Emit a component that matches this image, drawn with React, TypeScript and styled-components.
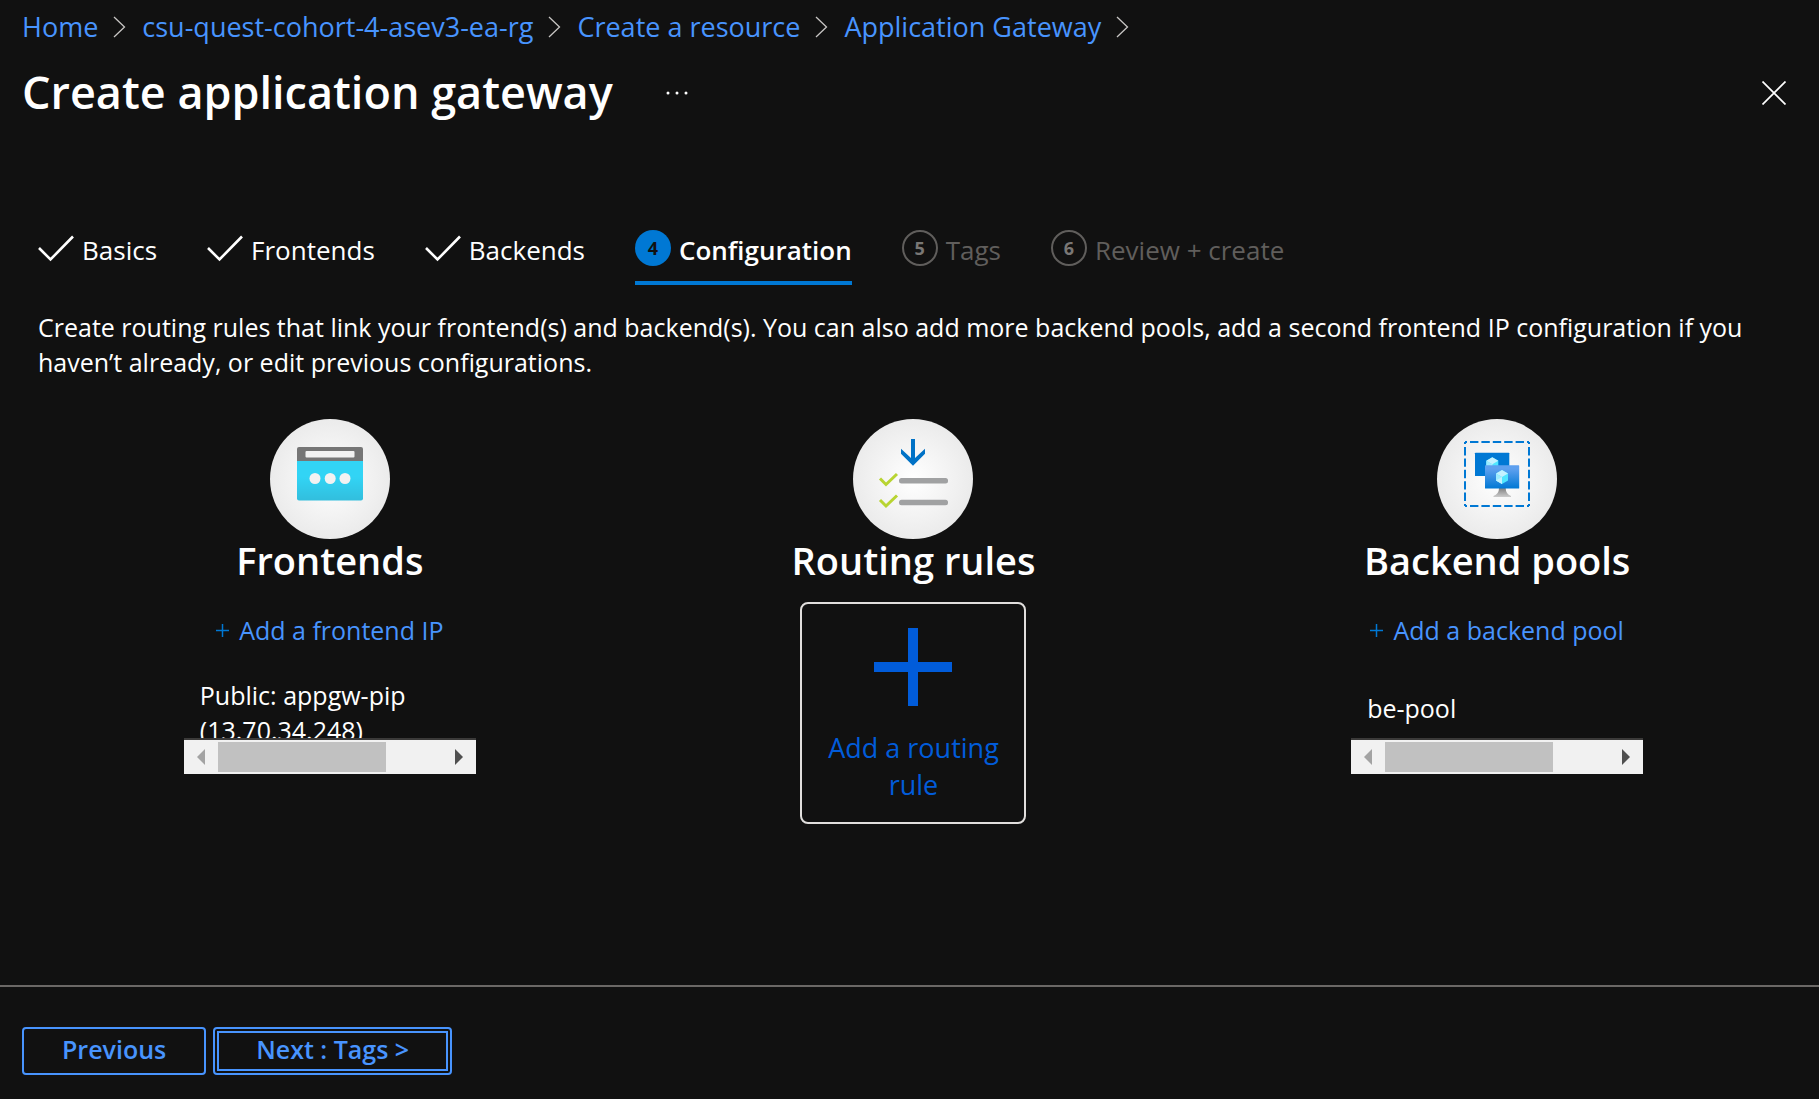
import React from "react";
import styled, { createGlobalStyle, css } from "styled-components";

const color = {
  page: "#111111",
  text: "#ffffff",
  link: "#4894fe",
  accent: "#0078d4",
  action: "#015cda",
  muted: "#605e5c",
  rule: "#6b6866",
};

const GlobalStyle = createGlobalStyle`
  *, *::before, *::after { box-sizing: border-box; }
  body {
    margin: 0;
    background: ${color.page};
    color: ${color.text};
    font-family: "Segoe UI", "Open Sans", "Noto Sans", sans-serif;
    font-size: 25px;
    line-height: 35px;
  }
  button { font: inherit; color: inherit; background: none; border: 0; padding: 0; cursor: pointer; }
  a { color: ${color.link}; text-decoration: none; }
  h1, h2, p, ol, ul { margin: 0; padding: 0; }
  ol, ul { list-style: none; }
  svg { display: block; flex: none; }
`;

const Page = styled.div`
  min-height: 100vh;
  display: flex;
  flex-direction: column;
`;

const Crumbs = styled.ol`
  display: flex;
  flex-wrap: wrap;
  padding: 9px 22px 0;
  font-size: 27px;
`;

const Crumb = styled.li`
  display: flex;
  align-items: center;
  gap: 15px;
  margin-right: 16px;
`;

const TitleBar = styled.header`
  display: flex;
  align-items: center;
  padding: 16px 33px 0 22px;
  height: 81px;
`;

const Title = styled.h1`
  padding-bottom: 2px;
  font-size: 45px;
  line-height: 62px;
  font-weight: 600;
`;

const IconButton = styled.button<{ $push?: boolean }>`
  display: flex;
  margin-left: ${(p) => (p.$push ? "auto" : "52px")};
`;

const Main = styled.main`
  flex: 1;
  padding: 97px 30px 0 38px;
`;

const Tabs = styled.div`
  display: flex;
  gap: 50px;
`;

const Tab = styled.button<{ $active?: boolean }>`
  display: flex;
  align-items: center;
  gap: 8px;
  height: 63px;
  padding-bottom: 8px;
  border-bottom: 4px solid transparent;
  font-size: 26px;
  ${(p) =>
    p.$active &&
    css`
      border-bottom-color: ${color.accent};
      font-weight: 600;
    `}
  &:disabled {
    color: ${color.muted};
  }
`;

const TabLabel = styled.span`
  padding-top: 6px;
`;

const StepNumber = styled.span<{ $active?: boolean }>`
  display: flex;
  align-items: center;
  justify-content: center;
  width: 36px;
  height: 36px;
  border: ${(p) => (p.$active ? "0" : `2px solid ${color.muted}`)};
  border-radius: 50%;
  background: ${(p) => (p.$active ? color.accent : "none")};
  color: ${(p) => (p.$active ? color.page : "#797775")};
  font-size: 18px;
  line-height: 24px;
  font-weight: 700;
`;

const Intro = styled.p`
  padding-top: 25px;
`;

const Columns = styled.div`
  display: grid;
  grid-template-columns: repeat(3, 1fr);
  padding-top: 39px;
`;

const Column = styled.section`
  display: flex;
  flex-direction: column;
  align-items: center;
`;

const Heading = styled.h2`
  font-size: 38px;
  line-height: 42px;
  font-weight: 600;
`;

const AddLink = styled.button`
  display: flex;
  align-items: center;
  gap: 10px;
  margin-top: 32px;
  color: ${color.link};
`;

const ItemPane = styled.div`
  width: 292px;
  margin-top: 30px;
`;

const Items = styled.div`
  display: flex;
  align-items: safe center;
  height: 62px;
  padding: 0 16px;
  border-bottom: 2px solid #3b3a39;
  overflow: hidden;
`;

const ScrollBar = styled.div`
  display: flex;
  height: 34px;
  padding: 2px 0;
  background: #f1f1f1;
`;

const ScrollArrow = styled.button`
  display: flex;
  align-items: center;
  justify-content: center;
  width: 34px;
`;

const ScrollTrack = styled.div`
  flex: 1;
`;

const ScrollThumb = styled.div`
  width: 75%;
  height: 100%;
  background: #c1c1c1;
`;

const RuleCard = styled.button`
  display: flex;
  flex-direction: column;
  align-items: center;
  gap: 23px;
  width: 226px;
  margin-top: 21px;
  padding: 24px 20px 19px;
  border: 2px solid #e1dfdd;
  border-radius: 8px;
  color: ${color.action};
  font-size: 27px;
  line-height: 37px;
`;

const Footer = styled.footer`
  display: flex;
  gap: 7px;
  padding: 40px 22px 24px;
  border-top: 2px solid ${color.rule};
`;

const FooterButton = styled.button<{ $focused?: boolean }>`
  height: 48px;
  padding: 0 ${(p) => (p.$focused ? 41 : 38)}px 3px;
  border: 2px solid ${color.link};
  border-radius: 4px;
  color: ${color.link};
  font-weight: 600;
  outline: ${(p) => (p.$focused ? `2px solid ${color.link}` : "none")};
  outline-offset: -6px;
`;

const Chevron = () => (
  <svg width="13" height="22" viewBox="0 0 13 22" fill="none" stroke="#c8c6c4" strokeWidth="1.3">
    <path d="M1 1l10.5 10L1 21" />
  </svg>
);

const Check = () => (
  <svg width="36" height="36" viewBox="0 0 36 36" fill="none" stroke="#fff" strokeWidth="2.6">
    <path d="M1 18l11.500 11.500L35 6.500" />
  </svg>
);

const Disc = ({ id, children }: { id: string; children: React.ReactNode }) => (
  <svg width="120" height="120" viewBox="0 0 120 120" aria-hidden="true">
    <defs>
      <radialGradient id={id}>
        <stop offset="0" stopColor="#ffffff" />
        <stop offset="1" stopColor="#ebebeb" />
      </radialGradient>
    </defs>
    <circle cx="60" cy="60" r="60" fill={`url(#${id})`} />
    {children}
  </svg>
);

const FrontendIcon = () => (
  <Disc id="discFront">
    <defs>
      <linearGradient id="pane" x1="0" y1="0" x2="0" y2="1">
        <stop offset="0.4" stopColor="#32d4f5" />
        <stop offset="1" stopColor="#32bedd" />
      </linearGradient>
    </defs>
    <path d="M27 42h66v37.500a2 2 0 0 1-2 2H29a2 2 0 0 1-2-2z" fill="url(#pane)" />
    <path d="M29 28h62a2 2 0 0 1 2 2v12H27V30a2 2 0 0 1 2-2z" fill="#767676" />
    <rect x="35.500" y="32" width="49" height="6.500" rx="1" fill="#f2f2f2" />
    <g fill="#f2f2f2">
      <circle cx="45" cy="59.500" r="5.500" />
      <circle cx="60.200" cy="59.500" r="5.500" />
      <circle cx="75" cy="59.500" r="5.500" />
    </g>
  </Disc>
);

const RoutingIcon = () => (
  <Disc id="discRoute">
    <path d="M58 20h4v19l10-9.300v5L60 46.800 48 34.700v-5l10 9.300z" fill="#0072c6" />
    <g fill="none" stroke="#b8d432" strokeWidth="3">
      <path d="M27 59.500l6 6L44 55" />
      <path d="M27 81l6 6 11-10.500" />
    </g>
    <g fill="#a0a1a2">
      <rect x="46" y="59" width="49" height="5.500" rx="2.500" />
      <rect x="46" y="80.800" width="49" height="5.500" rx="2.500" />
    </g>
  </Disc>
);

const Cube = ({ x, y }: { x: number; y: number }) => (
  <g transform={`translate(${x} ${y})`}>
    <path d="M6 0l6 3.500v7L6 14l-6-3.500v-7z" fill="#50e6ff" />
    <path d="M6 0l6 3.500L6 7 0 3.500z" fill="#c3f1ff" />
    <path d="M0 3.500L6 7v7l-6-3.500z" fill="#9cebff" />
    <path d="M0 10.500L6 7v7z" fill="#c3f1ff" />
  </g>
);

const BackendIcon = () => (
  <Disc id="discBack">
    <defs>
      <linearGradient id="screen" x1="0" y1="0" x2="0" y2="1">
        <stop offset="0.150" stopColor="#5ea0ef" />
        <stop offset="1" stopColor="#0078d4" />
      </linearGradient>
      <linearGradient id="stand" x1="0" y1="0" x2="0" y2="1">
        <stop offset="0" stopColor="#808080" />
        <stop offset="1" stopColor="#cccccc" />
      </linearGradient>
    </defs>
    <rect
      x="28"
      y="23"
      width="64"
      height="64"
      fill="none"
      stroke="#0078d4"
      strokeWidth="2"
      strokeDasharray="2 3 8.4 3 8.4 3 8.4 3 8.4 3 8.4 3 2 0"
    />
    <rect x="38" y="33.700" width="34.300" height="23.300" rx="0.600" fill="#0078d4" />
    <Cube x={49.3} y={38.3} />
    <path d="M62 69h6.700q0 6 5.300 8v1H56.500v-1q5.500-2 5.500-8z" fill="url(#stand)" />
    <rect x="48" y="46.300" width="34.200" height="23.300" rx="0.600" fill="url(#screen)" />
    <Cube x={59} y={51} />
  </Disc>
);

const SmallPlus = () => (
  <svg width="13" height="13" viewBox="0 0 13 13" stroke={color.accent} strokeWidth="1.5">
    <path d="M6.500 0v13M0 6.500h13" />
  </svg>
);

const ItemList = ({ children }: { children: React.ReactNode }) => (
  <ItemPane>
    <Items>
      <span>{children}</span>
    </Items>
    <ScrollBar>
      <ScrollArrow aria-label="Scroll left">
        <svg width="8" height="16" viewBox="0 0 8 16">
          <path d="M8 0v16L0 8z" fill="#a3a3a3" />
        </svg>
      </ScrollArrow>
      <ScrollTrack>
        <ScrollThumb />
      </ScrollTrack>
      <ScrollArrow aria-label="Scroll right">
        <svg width="8" height="16" viewBox="0 0 8 16">
          <path d="M0 0v16l8-8z" fill="#505050" />
        </svg>
      </ScrollArrow>
    </ScrollBar>
  </ItemPane>
);

const crumbs = ["Home", "csu-quest-cohort-4-asev3-ea-rg", "Create a resource", "Application Gateway"];
const doneSteps = ["Basics", "Frontends", "Backends"];

export default function App() {
  return (
    <Page>
      <GlobalStyle />
      <nav aria-label="Breadcrumb">
        <Crumbs>
          {crumbs.map((name) => (
            <Crumb key={name}>
              <a href="#">{name}</a>
              <Chevron />
            </Crumb>
          ))}
        </Crumbs>
      </nav>
      <TitleBar>
        <Title>Create application gateway</Title>
        <IconButton aria-label="More">
          <svg width="24" height="24" viewBox="0 0 24 24" fill="#fff">
            <circle cx="3" cy="12" r="1.500" />
            <circle cx="12" cy="12" r="1.500" />
            <circle cx="21" cy="12" r="1.500" />
          </svg>
        </IconButton>
        <IconButton $push aria-label="Close">
          <svg width="24" height="24" viewBox="0 0 24 24" stroke="#fff" strokeWidth="1.700">
            <path d="M.5.5l23 23M23.500.500l-23 23" />
          </svg>
        </IconButton>
      </TitleBar>

      <Main>
        <Tabs role="tablist">
          {doneSteps.map((name) => (
            <Tab key={name} role="tab">
              <Check />
              <TabLabel>{name}</TabLabel>
            </Tab>
          ))}
          <Tab role="tab" aria-selected="true" $active>
            <StepNumber $active>4</StepNumber>
            <TabLabel>Configuration</TabLabel>
          </Tab>
          <Tab role="tab" disabled>
            <StepNumber>5</StepNumber>
            <TabLabel>Tags</TabLabel>
          </Tab>
          <Tab role="tab" disabled>
            <StepNumber>6</StepNumber>
            <TabLabel>Review + create</TabLabel>
          </Tab>
        </Tabs>

        <Intro>
          Create routing rules that link your frontend(s) and backend(s). You can also add more backend pools, add a
          second frontend IP configuration if you haven’t already, or edit previous configurations.
        </Intro>

        <Columns>
          <Column>
            <FrontendIcon />
            <Heading>Frontends</Heading>
            <AddLink>
              <SmallPlus />
              Add a frontend IP
            </AddLink>
            <ItemList>Public: appgw-pip (13.70.34.248)</ItemList>
          </Column>
          <Column>
            <RoutingIcon />
            <Heading>Routing rules</Heading>
            <RuleCard>
              <svg width="78" height="78" viewBox="0 0 78 78" stroke={color.action} strokeWidth="10">
                <path d="M39 0v78M0 39h78" />
              </svg>
              Add a routing rule
            </RuleCard>
          </Column>
          <Column>
            <BackendIcon />
            <Heading>Backend pools</Heading>
            <AddLink>
              <SmallPlus />
              Add a backend pool
            </AddLink>
            <ItemList>be-pool</ItemList>
          </Column>
        </Columns>
      </Main>

      <Footer>
        <FooterButton>Previous</FooterButton>
        <FooterButton $focused>Next : Tags &gt;</FooterButton>
      </Footer>
    </Page>
  );
}
